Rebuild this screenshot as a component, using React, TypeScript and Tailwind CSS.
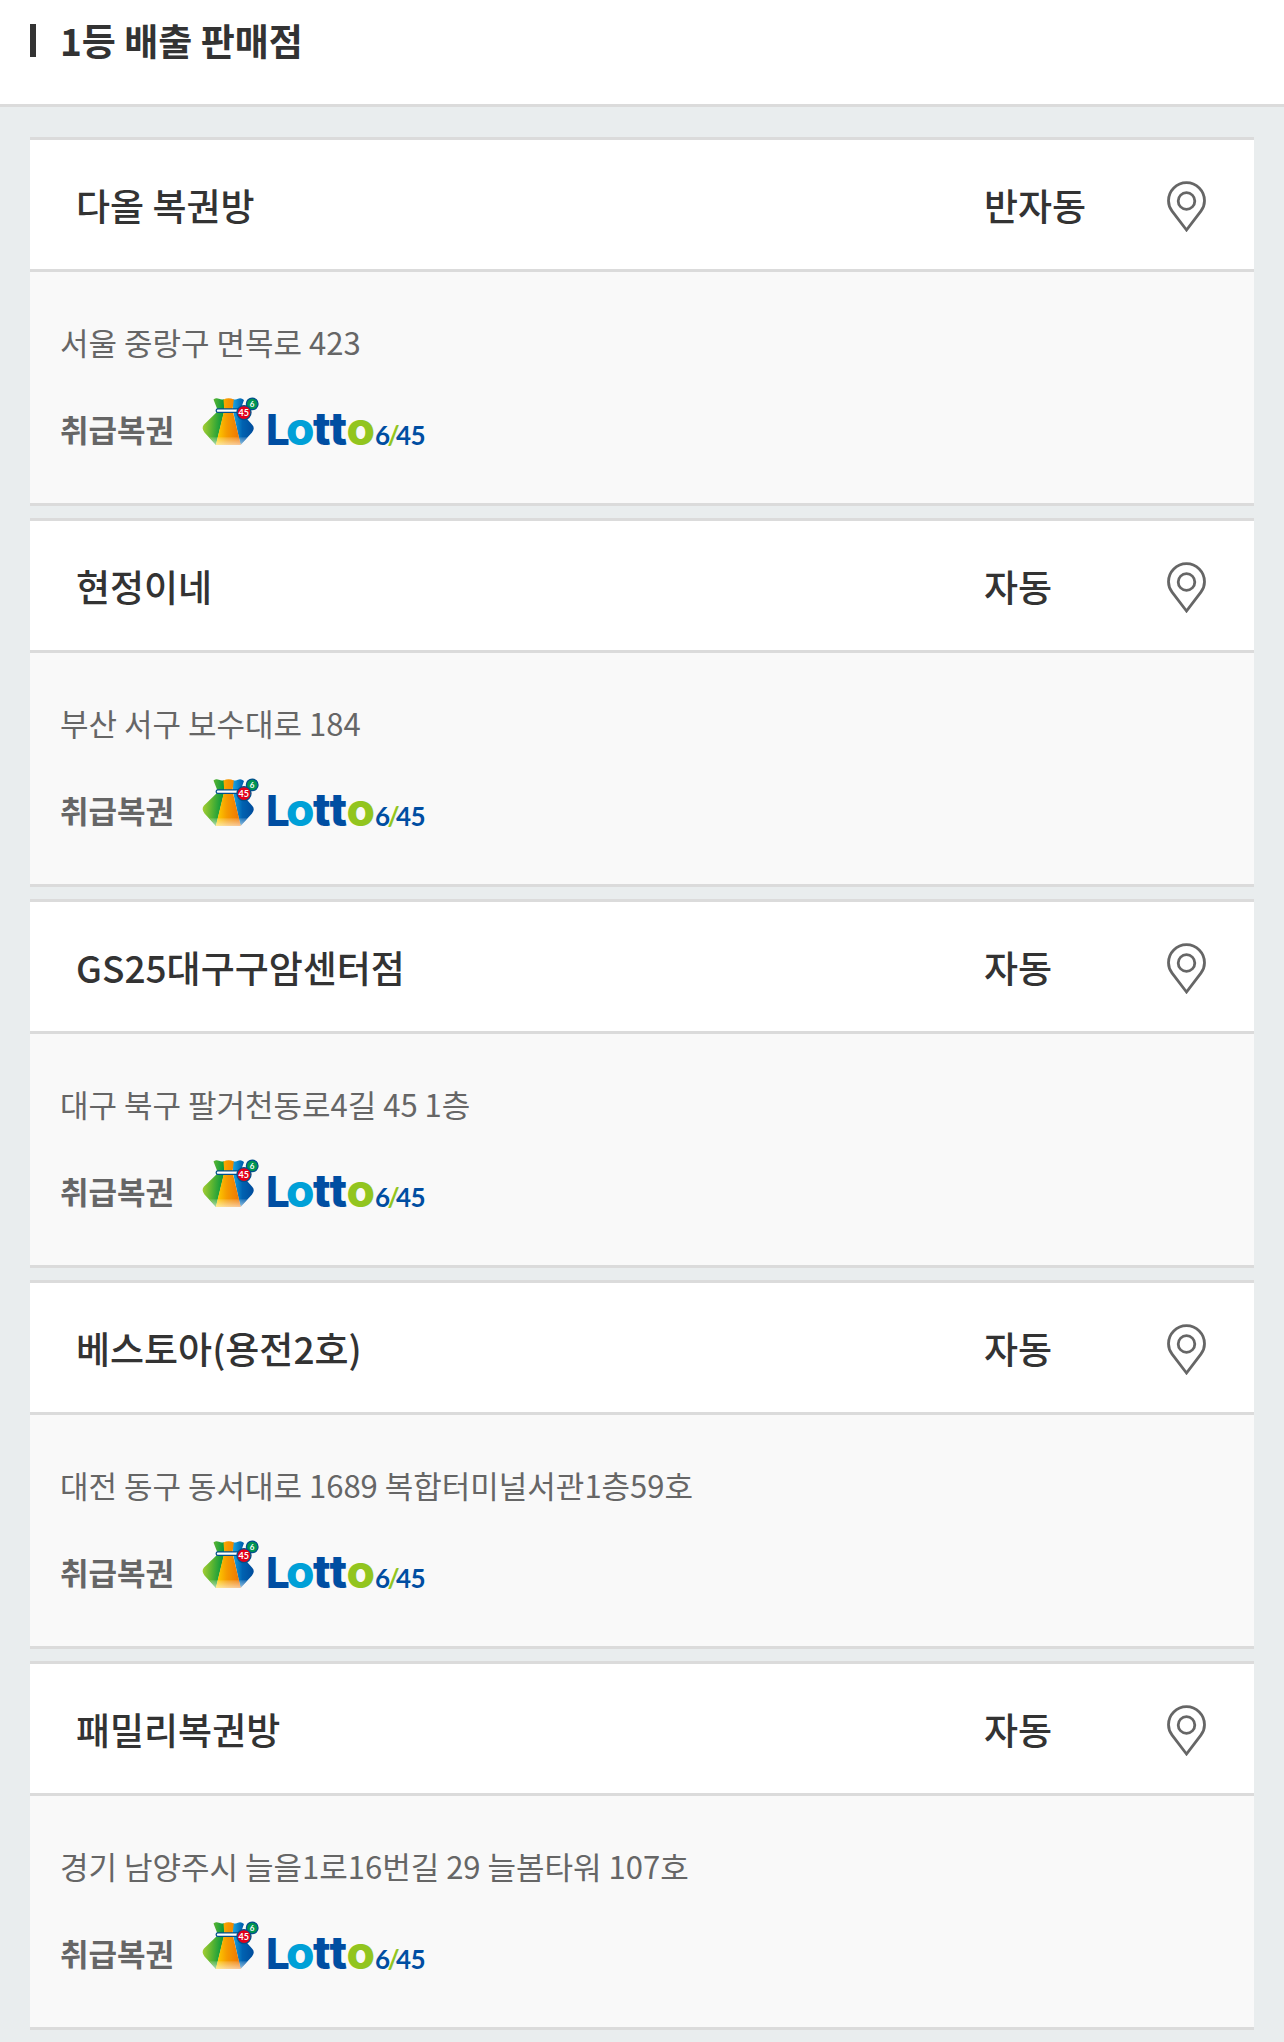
import { useId } from "react";

const stores = [
  { name: "다올 복권방", type: "반자동", address: "서울 중랑구 면목로 423" },
  { name: "현정이네", type: "자동", address: "부산 서구 보수대로 184" },
  { name: "GS25대구구암센터점", type: "자동", address: "대구 북구 팔거천동로4길 45 1층" },
  {
    name: "베스토아(용전2호)",
    type: "자동",
    address: "대전 동구 동서대로 1689 복합터미널서관1층59호",
  },
  {
    name: "패밀리복권방",
    type: "자동",
    address: "경기 남양주시 늘을1로16번길 29 늘봄타워 107호",
  },
];

function PinIcon() {
  return (
    <svg
      viewBox="0 0 40 52"
      className="w-10 h-[52px]"
      fill="none"
      stroke="#666666"
      strokeWidth="2.8"
      aria-hidden="true"
    >
      <path d="M20.5 50 L6.1 31.1 C3.7 27.9 2.5 24.7 2.5 20.7 A18 18 0 0 1 38.5 20.7 C38.5 24.7 37.3 27.9 34.9 31.1 Z" />
      <circle cx="20.5" cy="21" r="8.3" />
    </svg>
  );
}

function LottoLogo() {
  const id = useId();
  const green = `${id}green`;
  const orange = `${id}orange`;
  const blue = `${id}blue`;
  const shine = `${id}shine`;

  return (
    <svg
      viewBox="0 0 228 50"
      className="w-[228px] h-[50px] overflow-visible"
      role="img"
      aria-label="Lotto 6/45"
    >
      <defs>
        <linearGradient id={green} x1="0" x2="1" y1="0" y2="0.15">
          <stop offset="0" stopColor="#b5d334" />
          <stop offset="0.5" stopColor="#5cb531" />
          <stop offset="1" stopColor="#009640" />
        </linearGradient>
        <linearGradient id={orange} x1="0" x2="1" y1="0" y2="0">
          <stop offset="0" stopColor="#ffd400" />
          <stop offset="0.45" stopColor="#f59a00" />
          <stop offset="1" stopColor="#ee7203" />
        </linearGradient>
        <linearGradient id={blue} x1="0" x2="1" y1="0" y2="0">
          <stop offset="0" stopColor="#19a5e0" />
          <stop offset="0.45" stopColor="#0062b1" />
          <stop offset="1" stopColor="#004c9c" />
        </linearGradient>
        <linearGradient id={shine} x1="0" x2="0" y1="0" y2="1">
          <stop offset="0" stopColor="#fff" stopOpacity="0.15" />
          <stop offset="1" stopColor="#fff" stopOpacity="0.6" />
        </linearGradient>
      </defs>

      {/* Bag */}
      <path
        d="M13.5 3.5 Q16 1.5 19 2.8 Q21.5 4.2 24 3.2 L24.5 14 L16 49 L4.5 36.5 Q1 32 4 28.5 L18 15 Z"
        fill={`url(#${green})`}
      />
      <path
        d="M33 3.2 Q36 4.2 38 2.8 Q41 1.4 44 4 L40 15 L52 28.5 Q55.5 32 52 36.5 L40.5 49 L33 15 Z"
        fill={`url(#${blue})`}
      />
      <path
        d="M23.5 3.5 Q28.5 0.8 33.8 3.5 L32.5 14 L40.8 49 H15.8 L24.3 14 Z"
        fill={`url(#${orange})`}
      />
      <path d="M9.5 41.3 H47.3 L40.8 49 H15.8 Z" fill={`url(#${shine})`} />
      <rect x="16.2" y="12.9" width="26" height="3.4" rx="1.6" fill="#fff" stroke="#00508c" strokeWidth="1.3" />

      {/* Balls */}
      <circle cx="52.2" cy="7.9" r="5.8" fill="#009550" stroke="#00508c" strokeWidth="1.3" />
      <circle cx="44" cy="16.6" r="7" fill="#e2001a" stroke="#00508c" strokeWidth="1.3" />
      <g fill="#fff" fontWeight="700" fontFamily="Lato, sans-serif" textAnchor="middle">
        <text x="52" y="11" fontSize="8">
          6
        </text>
        <text x="43.8" y="19.8" fontSize="9">
          45
        </text>
      </g>

      {/* Wordmark */}
      <text y="48.5" fontFamily="Inter, sans-serif" fontWeight="800" fontSize="46" fill="#004ea2">
        <tspan x="66" fontSize="42">
          L
        </tspan>
        <tspan x="86" fill="#00a0d7">
          o
        </tspan>
        <tspan x="113">t</tspan>
        <tspan x="129.5">t</tspan>
        <tspan x="146.5" fill="#92c51f">
          o
        </tspan>
      </text>
      <text y="48.5" fontFamily="Lato, sans-serif" fontWeight="700" fontSize="26" fill="#004ea2">
        <tspan x="175">6</tspan>
        <tspan x="187.5" fill="#92c51f">
          /
        </tspan>
        <tspan x="196">4</tspan>
        <tspan x="210.5">5</tspan>
      </text>
    </svg>
  );
}

function StoreCard({ name, type, address }: (typeof stores)[number]) {
  return (
    <li className="border-y-[3px] border-[#dbdbdb] bg-[#f9f9f9]">
      <div className="flex items-center h-[132px] pt-0.5 border-b-[3px] border-[#dbdbdb] bg-white text-[37px] font-medium text-[#333333]">
        <h3 className="flex-1 pl-[46px]">{name}</h3>
        <span className="w-[134px] whitespace-nowrap">{type}</span>
        <span className="w-[136px] flex justify-center">
          <button type="button" aria-label={`${name} 위치 보기`} className="cursor-pointer">
            <PinIcon />
          </button>
        </span>
      </div>

      <div className="px-[30px] pt-12 pb-[57px] text-[31px] text-[#666666]">
        <p className="leading-11">{address}</p>
        <div className="mt-8 flex items-end gap-[26px]">
          <strong className="font-bold leading-[34px]">취급복권</strong>
          <LottoLogo />
        </div>
      </div>
    </li>
  );
}

export default function App() {
  return (
    <main className="min-h-screen bg-[#e9edee] font-['Noto_Sans_CJK_KR',sans-serif]">
      <header className="flex items-center gap-6 px-[30px] pt-5 pb-11 bg-white border-b-[3px] border-[#dbdbdb]">
        <span className="w-1.5 h-[33px] bg-[#333333]" />
        <h2 className="text-[37px] leading-10 font-bold text-[#333333]">1등 배출 판매점</h2>
      </header>

      <ul className="flex flex-col gap-3 px-[30px] pt-[30px] pb-3">
        {stores.map((store) => (
          <StoreCard key={store.name} {...store} />
        ))}
      </ul>
    </main>
  );
}
